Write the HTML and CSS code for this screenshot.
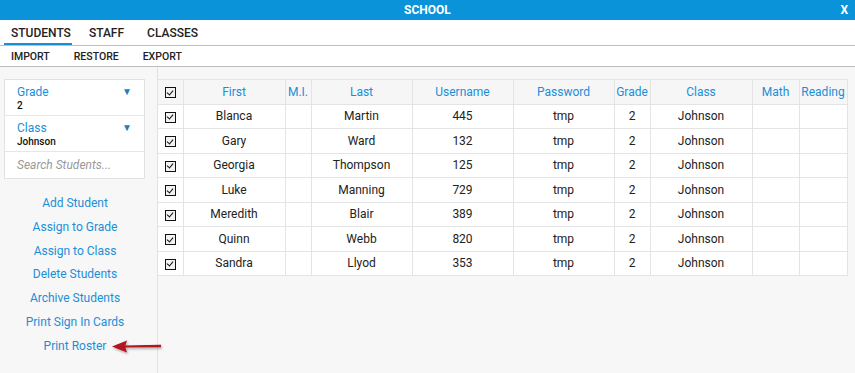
FILE: index.html
```html
<!DOCTYPE html>
<html lang="en">
<head>
    <meta charset="UTF-8">
    <title>School</title>
    <link rel="stylesheet" href="styles.css">
</head>
<body>
    <!-- Title Bar -->
    <div class="titlebar">
        <span class="title">SCHOOL</span>
        <span class="close">X</span>
    </div>

    <!-- Tabs -->
    <div class="tabs">
        <a class="tab active">STUDENTS</a>
        <a class="tab">STAFF</a>
        <a class="tab">CLASSES</a>
    </div>
    <div class="subtabs">
        <a class="subtab">IMPORT</a>
        <a class="subtab">RESTORE</a>
        <a class="subtab">EXPORT</a>
    </div>

    <!-- Main -->
    <div class="main">
        <div class="sidebar">
            <div class="filters">
                <div class="filter">
                    <div class="filter-head"><span>Grade</span><span class="caret">&#9660;</span></div>
                    <div class="filter-value">2</div>
                </div>
                <div class="filter">
                    <div class="filter-head"><span>Class</span><span class="caret">&#9660;</span></div>
                    <div class="filter-value">Johnson</div>
                </div>
                <div class="search">Search Students...</div>
            </div>
            <ul class="actions">
                <li><a>Add Student</a></li>
                <li><a>Assign to Grade</a></li>
                <li><a>Assign to Class</a></li>
                <li><a>Delete Students</a></li>
                <li><a>Archive Students</a></li>
                <li><a>Print Sign In Cards</a></li>
                <li class="roster"><a>Print Roster</a>
                    <svg class="arrow" width="60" height="20" viewBox="0 0 60 20">
                        <defs>
                            <filter id="sh" x="-20%" y="-50%" width="140%" height="200%">
                                <feDropShadow dx="1" dy="1.5" stdDeviation="1" flood-color="#000" flood-opacity="0.35"/>
                            </filter>
                        </defs>
                        <g filter="url(#sh)">
                            <path d="M14 8.5 L51 7.8 L51 10.2 L14 10.5 Z" fill="#b3121c"/>
                            <path d="M2 9.5 L17 3.5 L15 9.5 L17 15.5 Z" fill="#b3121c"/>
                        </g>
                    </svg>
                </li>
            </ul>
        </div>

        <div class="content">
            <table class="roster-table">
                <colgroup>
                    <col style="width:25px"><col style="width:102px"><col style="width:26px">
                    <col style="width:101px"><col style="width:101px"><col style="width:101px">
                    <col style="width:36px"><col style="width:102px"><col style="width:47px">
                    <col style="width:48px">
                </colgroup>
                <thead>
                    <tr>
                        <th class="chk"><span class="box"></span></th>
                        <th>First</th><th>M.I.</th><th>Last</th><th>Username</th>
                        <th>Password</th><th>Grade</th><th>Class</th><th>Math</th><th>Reading</th>
                    </tr>
                </thead>
                <tbody id="rows"></tbody>
            </table>
        </div>
    </div>

    <script>
        const students = [
            ['Blanca', 'Martin', '445'],
            ['Gary', 'Ward', '132'],
            ['Georgia', 'Thompson', '125'],
            ['Luke', 'Manning', '729'],
            ['Meredith', 'Blair', '389'],
            ['Quinn', 'Webb', '820'],
            ['Sandra', 'Llyod', '353']
        ];

        const tbody = document.getElementById('rows');
        students.forEach(function(s) {
            const tr = document.createElement('tr');
            tr.innerHTML =
                '<td class="chk"><span class="box"></span></td>' +
                '<td>' + s[0] + '</td><td></td><td>' + s[1] + '</td>' +
                '<td>' + s[2] + '</td><td>tmp</td><td>2</td><td>Johnson</td><td></td><td></td>';
            tbody.appendChild(tr);
        });
    </script>
</body>
</html>
```
FILE: styles.css
```css
/* ===== BASE RESET ===== */
* {
    margin: 0;
    padding: 0;
    box-sizing: border-box;
}

body, html {
    width: 100%;
    height: 100%;
    font-family: Roboto, 'Liberation Sans', Arial, sans-serif;
    color: #222;
    background: #f7f7f7;
    overflow: hidden;
}

body {
    display: flex;
    flex-direction: column;
}

/* ===== TITLE BAR ===== */
.titlebar {
    height: 20px;
    background: #0b93d9;
    color: #fff;
    font-weight: 700;
    font-size: 12px;
    display: flex;
    align-items: center;
    justify-content: center;
    position: relative;
}

.titlebar .close {
    position: absolute;
    right: 7px;
    top: 3px;
    font-size: 12px;
}

/* ===== TABS ===== */
.tabs {
    height: 26px;
    background: #fff;
    display: flex;
    padding-left: 4px;
    border-bottom: 1px solid #bdbdbd;
}

.tab {
    font-size: 12px;
    font-weight: 500;
    color: #222;
    padding: 6px 1px 0 7px;
    border-bottom: 2px solid transparent;
}

.tab.active {
    border-bottom-color: #1a8fd8;
}

.tab:nth-child(2) {
    margin-left: 10px;
}

.tab:nth-child(3) {
    margin-left: 15px;
}

.subtabs {
    height: 21px;
    background: #fff;
    display: flex;
    align-items: center;
    padding-left: 11px;
    border-bottom: 1px solid #bdbdbd;
    gap: 24px;
}

.subtab {
    font-size: 10.5px;
    font-weight: 500;
    color: #222;
}

/* ===== MAIN ===== */
.main {
    flex: 1;
    display: flex;
}

.sidebar {
    width: 158px;
    border-right: 1px solid #e2e2e2;
    padding: 12px 12px 0 4px;
}

.filters {
    background: #fff;
    border: 1px solid #e2e2e2;
}

.filter {
    height: 36px;
    border-bottom: 1px solid #e6e6e6;
    padding: 5px 12px 0 12px;
}

.filter-head {
    display: flex;
    justify-content: space-between;
    color: #1a8fd8;
    font-size: 12px;
    line-height: 14px;
}

.caret {
    font-size: 10px;
    color: #1a7fc4;
}

.filter-value {
    font-size: 10px;
    font-weight: 500;
    color: #111;
    line-height: 13px;
}

.search {
    height: 26px;
    padding: 6px 12px 0 12px;
    font-size: 12px;
    font-style: italic;
    color: #999;
}

.actions {
    list-style: none;
    margin-top: 13px;
    text-align: center;
    width: 142px;
}

.actions li {
    height: 23.8px;
    line-height: 23.8px;
    font-size: 12px;
    color: #1a8fd8;
    position: relative;
}

.arrow {
    position: absolute;
    left: 106px;
    top: 2px;
}

/* ===== TABLE ===== */
.content {
    flex: 1;
    padding-top: 12px;
}

.roster-table {
    border-collapse: collapse;
    table-layout: fixed;
    width: 689px;
    background: #fff;
    font-size: 12px;
}

.roster-table th,
.roster-table td {
    border: 1px solid #e4e4e4;
    height: 24.5px;
    text-align: center;
    padding: 0;
    font-weight: 400;
}

.roster-table thead th {
    background: #f6f6f6;
    color: #1a8fd8;
}

.roster-table td {
    color: #222;
}

.roster-table .chk {
    border-left: none;
}

.box {
    display: inline-block;
    width: 11px;
    height: 11px;
    border: 1.5px solid #111;
    background: #f2f2f2;
    position: relative;
    vertical-align: middle;
}

.box::after {
    content: "";
    position: absolute;
    left: 2.5px;
    top: 0.5px;
    width: 3px;
    height: 5px;
    border-right: 1.6px solid #111;
    border-bottom: 1.6px solid #111;
    transform: rotate(40deg);
}
```
